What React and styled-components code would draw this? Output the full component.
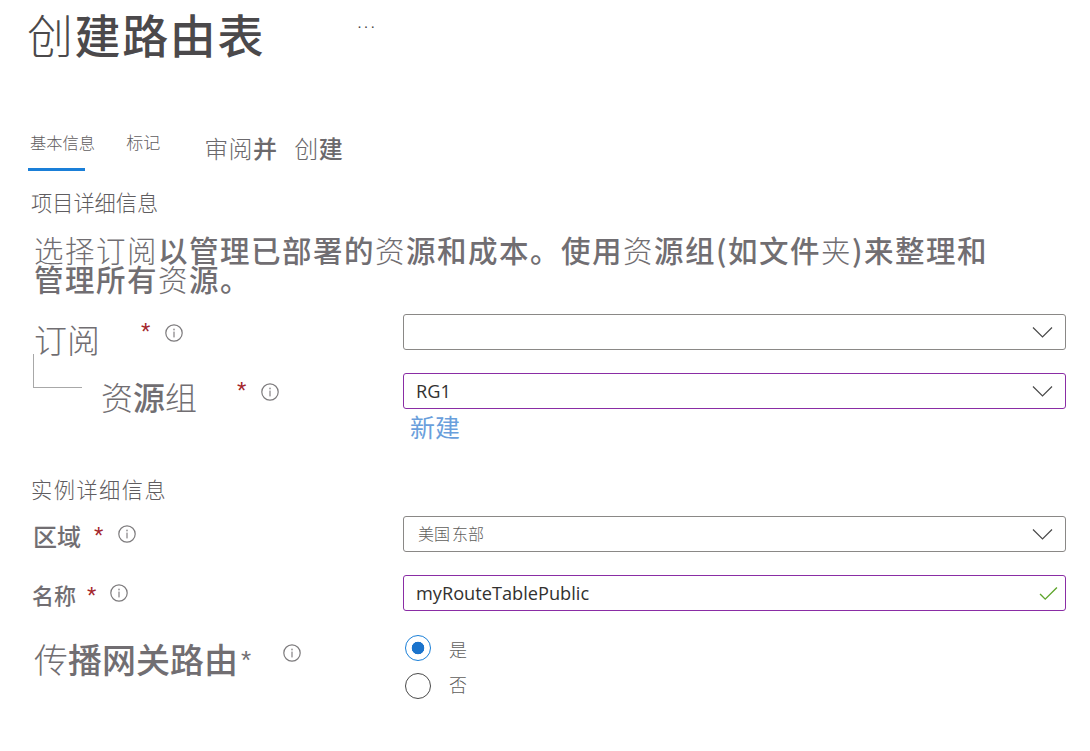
import styled, { createGlobalStyle } from "styled-components";

const cjk = `"Noto Sans CJK SC", "Noto Sans", sans-serif`;

const InfoIcon = () => (
    <InfoSvg viewBox="0 0 18 18">
        <circle cx="9" cy="9" r="8.2" fill="none" stroke="#7d7b7d" strokeWidth="1.2" />
        <circle cx="9" cy="5.4" r="1" fill="#a3a1a3" />
        <rect x="8.2" y="7.6" width="1.6" height="5.8" fill="#a3a1a3" />
    </InfoSvg>
);

const Chevron = () => (
    <FieldIcon viewBox="0 0 21 12" width="21" height="12">
        <path d="M1 1.5 L10.5 11 L20 1.5" fill="none" stroke="#4a4a4a" strokeWidth="1.2" />
    </FieldIcon>
);

const Check = () => (
    <FieldIcon viewBox="0 0 20 16" width="19" height="15">
        <path d="M1 8.5 L6.5 14 L19 1.5" fill="none" stroke="#5ea52c" strokeWidth="1.5" />
    </FieldIcon>
);

const App = () => {
    return (
        <Page>
            <GlobalStyle />
            <Header>
                <Title>
                    <Thin>创</Thin>建路由表
                </Title>
                <More>···</More>
            </Header>

            <Tabs>
                <Tab $active>基本信息</Tab>
                <Tab $left={31} $size={17}>标记</Tab>
                <ReviewTab>
                    审阅<Heavy>并</Heavy>
                    <ReviewGap />创<Heavy>建</Heavy>
                </ReviewTab>
            </Tabs>

            <SectionTitle $top={16}>项目详细信息</SectionTitle>
            <Intro>
                <Thin>选择订阅</Thin>以管理已部署的<Thin>资</Thin>源和成本。使用<Thin>资</Thin>源组(如文件<Thin>夹</Thin>)来整理和
                <br />
                管理所有<Thin>资</Thin>源。
            </Intro>

            <FormRow $top={22}>
                <LabelCell $indent={34}>
                    <LabelText $size={33} $drop={14} $width={107}><Thin>订阅</Thin></LabelText>
                    <Star $drop={0}>*</Star>
                    <InfoWrap $left={15} $drop={1}><InfoIcon /></InfoWrap>
                </LabelCell>
                <Select />
            </FormRow>

            <FormRow $top={23}>
                <LabelCell $indent={33}>
                    <TreeElbow />
                    <LabelText $size={32} $drop={10} $width={136} $left={19}>
                        <Thin>资</Thin><Heavy>源</Heavy><Thin>组</Thin>
                    </LabelText>
                    <Star $drop={0}>*</Star>
                    <InfoWrap $left={15} $drop={1}><InfoIcon /></InfoWrap>
                </LabelCell>
                <Select $focused>
                    <Value>RG1</Value>
                </Select>
            </FormRow>

            <FormRow $top={0}>
                <div />
                <NewLink>新建</NewLink>
            </FormRow>

            <SectionTitle $top={27} $spacing={1.5}>实例详细信息</SectionTitle>

            <FormRow $top={12}>
                <LabelCell $indent={33}>
                    <LabelText $size={24} $drop={4} $width={61}><Heavy>区域</Heavy></LabelText>
                    <Star $drop={4}>*</Star>
                    <InfoWrap $left={15} $drop={-1}><InfoIcon /></InfoWrap>
                </LabelCell>
                <Select>
                    <RegionValue>美国<RegionGap /><Thin>东部</Thin></RegionValue>
                </Select>
            </FormRow>

            <FormRow $top={23}>
                <LabelCell $indent={32}>
                    <LabelText $size={22} $drop={2} $width={55}><Heavy>名称</Heavy></LabelText>
                    <Star $drop={6}>*</Star>
                    <InfoWrap $left={14} $drop={-1}><InfoIcon /></InfoWrap>
                </LabelCell>
                <Select $focused $valid>
                    <Value>myRouteTablePublic</Value>
                </Select>
            </FormRow>

            <FormRow $top={24}>
                <PropagationCell>
                    <LabelText $size={34} $drop={-2} $width={219}>
                        <Thin>传</Thin><Heavy>播网关路由</Heavy>
                        <PlainStar>*</PlainStar>
                    </LabelText>
                    <InfoWrap $left={30} $drop={-15}><InfoIcon /></InfoWrap>
                </PropagationCell>
                <Radios>
                    <RadioRow>
                        <Radio $checked />
                        <RadioText $drop={2}>是</RadioText>
                    </RadioRow>
                    <RadioRow>
                        <Radio />
                        <RadioText $drop={-4}>否</RadioText>
                    </RadioRow>
                </Radios>
            </FormRow>
        </Page>
    );
};

const GlobalStyle = createGlobalStyle`
    html, body {
        margin: 0;
        background: #fff;
    }
`;

const Page = styled.div`
    width: 1090px;
    height: 751px;
    overflow: hidden;
    background: #fff;
    font-family: ${cjk};
    color: #6f6c70;
`;

const Thin = styled.span`
    font-weight: 300;
`;

const Heavy = styled.span`
    font-weight: 500;
`;

const Header = styled.div`
    display: flex;
    height: 72px;
    padding-left: 27px;
`;

const Title = styled.h1`
    margin: 0;
    width: 238px;
    font-size: 46px;
    line-height: 67px;
    letter-spacing: 1.6px;
    font-weight: 500;
    color: #4b494b;
    white-space: nowrap;
`;

const More = styled.div`
    margin-left: 92px;
    font-family: "Liberation Sans", sans-serif;
    font-size: 15px;
    line-height: 52px;
    letter-spacing: 1.6px;
    color: #444;
`;

const Tabs = styled.div`
    display: flex;
    height: 41px;
    margin-top: 58px;
    padding-left: 30px;
`;

const Tab = styled.div`
    position: relative;
    margin-left: ${(p) => p.$left || 0}px;
    font-size: ${(p) => p.$size || 16.3}px;
    font-weight: 300;
    line-height: 24px;
    white-space: nowrap;
    color: #5f5d60;

    ${(p) =>
        p.$active &&
        `&::after {
            content: "";
            position: absolute;
            left: -2px;
            top: 38px;
            width: 57px;
            height: 3px;
            background: #1a7fd8;
        }`}
`;

const ReviewTab = styled.div`
    display: flex;
    margin-left: 44px;
    padding-top: 5px;
    font-size: 24px;
    font-weight: 300;
    line-height: 26px;
    letter-spacing: 0.4px;
    color: #6b696c;
`;

const ReviewGap = styled.span`
    width: 17px;
`;

const SectionTitle = styled.h2`
    margin: ${(p) => p.$top}px 0 0 31px;
    font-size: 21.2px;
    font-weight: 300;
    line-height: 30px;
    letter-spacing: ${(p) => p.$spacing || 0}px;
    color: #5f5d60;
`;

const Intro = styled.p`
    margin: 18px 0 0 34px;
    font-size: 29.5px;
    font-weight: 500;
    line-height: 28.5px;
    letter-spacing: 1.5px;
    white-space: nowrap;
    color: #716e72;
`;

const FormRow = styled.div`
    display: grid;
    grid-template-columns: 403px 663px;
    margin-top: ${(p) => p.$top}px;
`;

const LabelCell = styled.div`
    display: flex;
    align-items: center;
    height: 36px;
    padding-left: ${(p) => p.$indent}px;
`;

const PropagationCell = styled.div`
    display: flex;
    align-items: center;
    height: 50px;
    padding-left: 34px;
`;

const LabelText = styled.div`
    flex: none;
    width: ${(p) => p.$width}px;
    margin-top: ${(p) => p.$drop}px;
    margin-left: ${(p) => p.$left || 0}px;
    font-size: ${(p) => p.$size}px;
    line-height: 36px;
    white-space: nowrap;
    color: #716e72;
`;

const TreeElbow = styled.div`
    flex: none;
    align-self: flex-start;
    width: 48px;
    height: 33px;
    margin-top: -19px;
    border-left: 1px solid #a8a8a8;
    border-bottom: 1px solid #a8a8a8;
`;

const Star = styled.span`
    flex: none;
    margin-top: ${(p) => p.$drop}px;
    font-family: "Liberation Sans", sans-serif;
    font-size: 24px;
    line-height: 22px;
    color: #a4262c;
`;

const PlainStar = styled.span`
    font-family: "Liberation Sans", sans-serif;
    font-size: 26px;
    vertical-align: 4px;
    margin-left: 3px;
    color: #716e72;
`;

const InfoWrap = styled.span`
    flex: none;
    display: flex;
    margin-left: ${(p) => p.$left}px;
    margin-top: ${(p) => p.$drop}px;
`;

const InfoSvg = styled.svg`
    width: 18px;
    height: 18px;
`;

const SelectBox = styled.div`
    display: flex;
    align-items: center;
    justify-content: space-between;
    box-sizing: border-box;
    height: 36px;
    padding: 0 ${(p) => (p.$valid ? 7 : 12)}px 0 12px;
    border: 1px solid ${(p) => (p.$focused ? "#8a2da5" : "#8a8886")};
    border-radius: 3px;
`;

const Select = ({ children, $focused, $valid }) => (
    <SelectBox $focused={$focused} $valid={$valid}>
        <span>{children}</span>
        {$valid ? <Check /> : <Chevron />}
    </SelectBox>
);

const FieldIcon = styled.svg`
    flex: none;
`;

const Value = styled.span`
    font-family: "Open Sans", sans-serif;
    font-size: 18.2px;
    line-height: 24px;
    color: #323130;
`;

const RegionValue = styled.span`
    display: block;
    margin: 0 0 2px 2px;
    font-size: 16px;
    font-weight: 300;
    line-height: 24px;
    color: #605e5c;
`;

const RegionGap = styled.span`
    display: inline-block;
    width: 2px;
`;

const NewLink = styled.a`
    display: block;
    height: 38px;
    padding-left: 7px;
    font-size: 25px;
    line-height: 34px;
    color: #6a9fdc;
`;

const Radios = styled.div`
    display: flex;
    flex-direction: column;
    gap: 12px;
    padding-left: 2px;
`;

const RadioRow = styled.div`
    display: flex;
    align-items: center;
    height: 26px;
`;

const Radio = styled.span`
    flex: none;
    box-sizing: border-box;
    width: 26px;
    height: 26px;
    border-radius: 50%;
    border: 1px solid ${(p) => (p.$checked ? "#1a7fd8" : "#4a4a4a")};
    background: ${(p) => (p.$checked ? "radial-gradient(circle, #1a73cc 0 6px, #fff 6.6px)" : "#fff")};
`;

const RadioText = styled.span`
    margin-left: 18px;
    margin-top: ${(p) => p.$drop}px;
    font-size: 18px;
    font-weight: 300;
    line-height: 24px;
    color: #605e5c;
`;

export default App;
